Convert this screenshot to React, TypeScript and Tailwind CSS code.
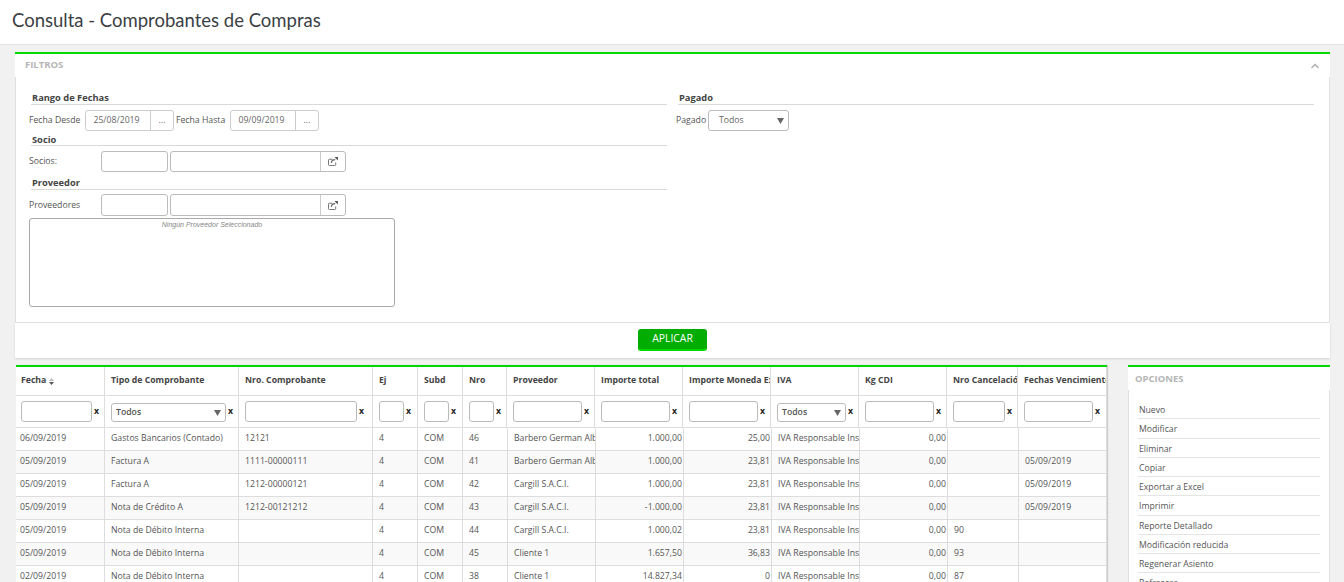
import { ChevronUp } from "lucide-react";

const headerCols = "grid grid-cols-[89px_134px_134px_45px_45px_44px_88px_88px_88px_88px_88px_71px_89px]";
const rowCols = "grid grid-cols-[89px_134px_134px_45px_45px_45px_88px_88px_88px_88px_88px_71px_88px]";

const headers = ["Fecha", "Tipo de Comprobante", "Nro. Comprobante", "Ej", "Subd", "Nro", "Proveedor", "Importe total", "Importe Moneda Extranjera", "IVA", "Kg CDI", "Nro Cancelación", "Fechas Vencimiento"];

const filterWidths = [71, 0, 112, 25, 25, 25, 69, 69, 69, 0, 69, 52, 69];

const rows = [
    ["06/09/2019", "Gastos Bancarios (Contado)", "12121", "4", "COM", "46", "Barbero German Alberto", "1.000,00", "25,00", "IVA Responsable Inscripto", "0,00", "", ""],
    ["05/09/2019", "Factura A", "1111-00000111", "4", "COM", "41", "Barbero German Alberto", "1.000,00", "23,81", "IVA Responsable Inscripto", "0,00", "", "05/09/2019"],
    ["05/09/2019", "Factura A", "1212-00000121", "4", "COM", "42", "Cargill S.A.C.I.", "1.000,00", "23,81", "IVA Responsable Inscripto", "0,00", "", "05/09/2019"],
    ["05/09/2019", "Nota de Crédito A", "1212-00121212", "4", "COM", "43", "Cargill S.A.C.I.", "-1.000,00", "23,81", "IVA Responsable Inscripto", "0,00", "", "05/09/2019"],
    ["05/09/2019", "Nota de Débito Interna", "", "4", "COM", "44", "Cargill S.A.C.I.", "1.000,02", "23,81", "IVA Responsable Inscripto", "0,00", "90", ""],
    ["05/09/2019", "Nota de Débito Interna", "", "4", "COM", "45", "Cliente 1", "1.657,50", "36,83", "IVA Responsable Inscripto", "0,00", "93", ""],
    ["02/09/2019", "Nota de Débito Interna", "", "4", "COM", "38", "Cliente 1", "14.827,34", "0", "IVA Responsable Inscripto", "0,00", "87", ""],
];

const options = ["Nuevo", "Modificar", "Eliminar", "Copiar", "Exportar a Excel", "Imprimir", "Reporte Detallado", "Modificación reducida", "Regenerar Asiento", "Refrescar"];

function Caret() {
    return (
        <svg width="7" height="6" viewBox="0 0 7 6" className="shrink-0">
            <path d="M0 0h7L3.5 6z" fill="#666" />
        </svg>
    );
}

function External() {
    return (
        <svg width="10" height="9" viewBox="0 0 11 10" fill="none" stroke="#666">
            <path d="M8.5 6v2.5a1 1 0 0 1-1 1h-6a1 1 0 0 1-1-1v-5a1 1 0 0 1 1-1H5" />
            <path d="M3.5 6.5C4 4 6 3 8 3" strokeWidth="1.3" />
            <path d="M7 0h4v4z" fill="#555" stroke="none" />
        </svg>
    );
}

function Section({ title }: { title: string }) {
    return (
        <div className="border-b border-[#d9d9d9] pl-[1px] text-[9.3px] font-bold leading-[13px] text-[#444]">
            {title}
        </div>
    );
}

function DateGroup({ value }: { value: string }) {
    return (
        <div className="flex h-[21px] w-[89px] rounded-[3px] border border-[#ccc] text-[#666]">
            <div className="flex w-[65px] items-center justify-center border-r border-[#ccc] pr-[3px] pt-[1px]">{value}</div>
            <div className="flex flex-1 items-center justify-center pt-[1px]">...</div>
        </div>
    );
}

function LookupRow({ label, tall }: { label: string; tall?: boolean }) {
    return (
        <div className={"flex items-center " + (tall ? "h-[22px]" : "h-[21px]")}>
            <span className="w-[72px] pt-[1px] text-[#555]">{label}</span>
            <div className="h-full w-[67px] rounded-[3px] border border-[#bbb]" />
            <div className="ml-[2px] flex h-full w-[176px] rounded-[3px] border border-[#bbb]">
                <div className="w-[150px] border-r border-[#ccc]" />
                <div className="flex flex-1 items-center justify-center">
                    <External />
                </div>
            </div>
        </div>
    );
}

export default function App() {
    return (
        <div className="h-[582px] overflow-hidden bg-[#f1f1f1] font-['Open_Sans',sans-serif] text-[8.7px] text-[#555]">
            <div className="flex h-[45px] items-center border-b border-[#e5e5e5] bg-white pb-[2px] pl-[12px] font-['Lato',sans-serif] text-[18.5px] text-[#3b3f45]">
                Consulta - Comprobantes de Compras
            </div>

            <div className="mx-[15px] mt-[7px] mr-[14px] border-t-2 border-[#00d800]">
                <div className="flex h-[23px] items-center justify-between bg-white pl-[10px] pr-[9px]">
                    <span className="text-[9.5px] font-bold text-[#b5b5b5]">FILTROS</span>
                    <ChevronUp size={12} strokeWidth={3.5} className="text-[#b5b5b5]" />
                </div>
                <div className="grid h-[245px] grid-cols-[647px_1fr] border-x border-[#e0e0e0] bg-white pt-[14px] pl-[13px] pr-[15px]">
                    <div>
                        <div className="ml-[2px] w-[636px]"><Section title="Rango de Fechas" /></div>
                        <div className="mt-[5px] flex h-[21px] items-center whitespace-nowrap">
                            <span className="w-[56px] pt-[1px]">Fecha Desde</span>
                            <DateGroup value="25/08/2019" />
                            <span className="ml-[2px] w-[54px] pt-[1px]">Fecha Hasta</span>
                            <DateGroup value="09/09/2019" />
                        </div>
                        <div className="ml-[2px] mt-[1px] w-[636px] pt-[2px] [&>div]:leading-[11px]"><Section title="Socio" /></div>
                        <div className="mt-[5px]"><LookupRow label="Socios:" /></div>
                        <div className="ml-[2px] mt-[4px] w-[636px]"><Section title="Proveedor" /></div>
                        <div className="mt-[4px]"><LookupRow label="Proveedores" tall /></div>
                        <div className="mt-[2px] h-[89px] w-[366px] rounded-[3px] border border-[#aaa] pt-[1px] text-center font-['Liberation_Sans',sans-serif] text-[7px] italic leading-[9px] text-[#888]">
                            Ningún Proveedor Seleccionado
                        </div>
                    </div>
                    <div>
                        <div className="ml-[2px]"><Section title="Pagado" /></div>
                        <div className="mt-[5px] flex h-[21px] items-center">
                            <span className="w-[32px] pt-[1px]">Pagado</span>
                            <div className="flex h-full w-[81px] items-center justify-between rounded-[3px] border border-[#bbb] pl-[10px] pr-[4px] pt-[1px] text-[#666]">
                                Todos
                                <Caret />
                            </div>
                        </div>
                    </div>
                </div>
                <div className="flex h-[36px] items-center justify-center border-t border-[#e0e0e0] bg-white shadow-[0_1px_2px_rgba(0,0,0,0.12)]">
                    <button className="mt-[-1px] h-[22px] w-[69px] rounded-[3px] border-b-2 border-[#00d800] bg-[#00ad00] text-[10.4px] font-medium text-white">
                        APLICAR
                    </button>
                </div>
            </div>

            <div className="mt-[7px] flex items-start pl-[16px]">
                <div className="w-[1091px] border-t-2 border-[#00d800] bg-white shadow-[1px_0_1px_rgba(0,0,0,0.15)]">
                    <div className={headerCols + " h-[29px] border-b border-[#ddd] font-bold text-[#444]"}>
                        {headers.map((h, i) => (
                            <div key={h} className={"flex items-center overflow-hidden whitespace-nowrap border-r border-[#ddd] " + (i === 0 ? "pl-[5px]" : "pl-[6px]")}>
                                {h}
                                {i === 0 && (
                                    <svg width="5" height="7" viewBox="0 0 5 7" className="ml-[3px] shrink-0">
                                        <path d="M0 3h5L2.5 0z" fill="#bbb" />
                                        <path d="M0 4h5L2.5 7z" fill="#555" />
                                    </svg>
                                )}
                            </div>
                        ))}
                    </div>
                    <div className={headerCols + " h-[32px] border-b border-[#ddd]"}>
                        {filterWidths.map((w, i) => (
                            <div key={i} className={"flex items-center border-r border-[#ddd] " + (i === 0 ? "pl-[5px]" : "pl-[6px]")}>
                                {w === 0 ? (
                                    <div className={"mt-[2px] flex h-[19px] items-center justify-between rounded-[3px] border border-[#bbb] px-[4px] font-semibold text-[#555] " + (i === 1 ? "w-[115px]" : "w-[69px]")}>
                                        Todos
                                        <Caret />
                                    </div>
                                ) : (
                                    <div className="h-[21px] rounded-[3px] border border-[#bbb]" style={{ width: w }} />
                                )}
                                <span className="ml-[2px] font-bold leading-none text-[#222]">x</span>
                            </div>
                        ))}
                    </div>
                    {rows.map((row, r) => (
                        <div key={r} className={rowCols + " h-[23px] border-b border-[#ddd] " + (r % 2 ? "bg-[#f9f9f9]" : "bg-white")}>
                            {row.map((c, i) => (
                                <div
                                    key={i}
                                    className={"flex items-center overflow-hidden whitespace-nowrap border-r border-[#ddd] " + (i === 7 || i === 8 || i === 10 ? "justify-end pr-[1px]" : i === 0 ? "pl-[4px]" : "pl-[6px]")}
                                >
                                    {c}
                                </div>
                            ))}
                        </div>
                    ))}
                </div>

                <div className="ml-[21px] w-[202px] border-t-2 border-[#00d800]">
                    <div className="flex h-[23px] items-center bg-white pl-[7px] pt-[1px] text-[9.5px] font-bold text-[#b5b5b5]">OPCIONES</div>
                    <div className="h-[200px] border-x border-[#e0e0e0] bg-white px-[9px] pt-[10px]">
                        {options.map((o) => (
                            <div key={o} className="flex h-[19.25px] items-center border-b border-[#e5e5e5] pl-[1px] pt-[3px]">
                                {o}
                            </div>
                        ))}
                    </div>
                </div>
            </div>
        </div>
    );
}
